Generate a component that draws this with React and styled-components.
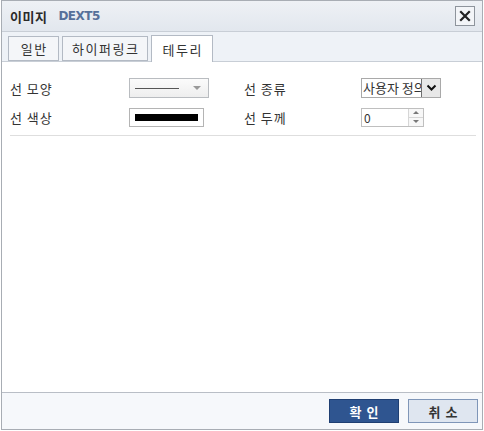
import React from "react";
import styled, { createGlobalStyle } from "styled-components";

const Global = createGlobalStyle`
  html, body { margin: 0; padding: 0; background: #fff; }
  body { font-family: "Noto Sans CJK KR", "Noto Sans", sans-serif; }
  * { box-sizing: border-box; }
`;

const Dialog = styled.div`
  margin-left: 1px;
  width: 482px;
  height: 430px;
  border: 1px solid #a8adb4;
  display: flex;
  flex-direction: column;
  background: #fff;
`;

const TitleBar = styled.div`
  height: 31px;
  flex: none;
  display: flex;
  align-items: center;
  padding: 0 7px 0 8px;
  background: linear-gradient(#eef1f5, #e2e7ee);
  border-bottom: 1px solid #c8ced6;
`;

const Title = styled.span`
  font-size: 13px;
  font-weight: 700;
  color: #2a2a2a;
  letter-spacing: 0.5px;
`;

const Product = styled.span`
  margin-left: 11px;
  font-family: "DejaVu Sans", Verdana, sans-serif;
  font-size: 12px;
  font-weight: 700;
  color: #56709a;
  letter-spacing: -0.5px;
`;

const CloseButton = styled.button`
  margin-left: auto;
  width: 20px;
  height: 20px;
  padding: 0;
  border: 1px solid #8e949c;
  background: #f3f5f8;
  display: flex;
  align-items: center;
  justify-content: center;
`;

const TabBar = styled.div`
  height: 30px;
  flex: none;
  display: flex;
  align-items: flex-end;
  gap: 3px;
  padding-left: 6px;
  background: #eef2f7;
  border-bottom: 1px solid #c8ced6;
`;

const Tab = styled.div`
  height: ${(p) => (p.$active ? "27px" : "25px")};
  width: ${(p) => p.$w}px;
  margin-bottom: ${(p) => (p.$active ? "-1px" : "0")};
  display: flex;
  align-items: center;
  justify-content: center;
  border: 1px solid #b3bac4;
  border-bottom: ${(p) => (p.$active ? "none" : "1px solid #b3bac4")};
  background: ${(p) => (p.$active ? "#fff" : "#f4f6f9")};
  font-size: 13px;
  letter-spacing: 1.5px;
  text-indent: 1.5px;
  color: #333;
  padding-top: ${(p) => (p.$active ? "1px" : "0")};
`;

const Content = styled.div`
  flex: 1;
  padding: 16px 6px 0 8px;
`;

const Form = styled.div`
  display: grid;
  grid-template-columns: 119px 115px 117px auto;
  grid-auto-rows: 20px;
  row-gap: 9px;
  align-items: center;
`;

const Label = styled.span`
  font-size: 13px;
  color: #333;
  letter-spacing: 1px;
`;

const LineSelect = styled.div`
  width: 80px;
  height: 20px;
  border: 1px solid #b9bcc0;
  background: linear-gradient(#fbfbfb, #eeeeee);
  display: flex;
  align-items: center;
  padding: 0 7px 0 5px;
`;

const LineSample = styled.div`
  width: 44px;
  height: 1px;
  background: #555;
`;

const Caret = styled.div`
  margin-left: auto;
  width: 0;
  height: 0;
  border-left: 4px solid transparent;
  border-right: 4px solid transparent;
  border-top: 4px solid #999;
`;

const TypeSelect = styled.div`
  width: 80px;
  height: 20px;
  border: 1px solid #a9a9a9;
  background: #fff;
  display: flex;
  align-items: stretch;
  overflow: hidden;
`;

const TypeText = styled.span`
  flex: 1;
  overflow: hidden;
  white-space: nowrap;
  font-size: 13px;
  line-height: 18px;
  padding-left: 1px;
  color: #333;
`;

const TypeButton = styled.div`
  width: 20px;
  flex: none;
  background: #e8e8e8;
  display: flex;
  align-items: center;
  justify-content: center;
  margin: -1px -1px -1px 0;
  border: 1px solid #6f6f6f;
`;

const ColorBox = styled.div`
  width: 75px;
  height: 19px;
  border: 1px solid #b4b4b4;
  background: #fff;
  padding: 5px 5px;
`;

const ColorFill = styled.div`
  height: 100%;
  background: #000;
`;

const Spin = styled.div`
  width: 63px;
  height: 19px;
  border: 1px solid #bfbfbf;
  display: flex;
  background: #fff;
`;

const SpinValue = styled.span`
  flex: 1;
  font-size: 12px;
  line-height: 17px;
  padding-left: 2px;
  color: #333;
`;

const SpinButtons = styled.div`
  width: 15px;
  display: flex;
  flex-direction: column;
  border-left: 1px solid #d6d6d6;
`;

const SpinButton = styled.div`
  flex: 1;
  display: flex;
  align-items: center;
  justify-content: center;
  background: #f7f7f7;
  & + & { border-top: 1px solid #d6d6d6; }
`;

const Arrow = styled.div`
  width: 0;
  height: 0;
  border-left: 3px solid transparent;
  border-right: 3px solid transparent;
  ${(p) => (p.$up ? "border-bottom: 3px solid #777;" : "border-top: 3px solid #777;")}
`;

const Separator = styled.div`
  margin-top: 8px;
  height: 1px;
  background: #dedede;
`;

const Footer = styled.div`
  height: 37px;
  flex: none;
  border-top: 1px solid #b9bec6;
  background: #f6f8fb;
  display: flex;
  align-items: center;
  justify-content: flex-end;
  gap: 9px;
  padding: 0 4px 0 0;
`;

const Button = styled.button`
  width: 70px;
  height: 24px;
  padding: 0;
  font-family: "Noto Sans CJK KR", sans-serif;
  font-size: 13px;
  font-weight: 700;
  letter-spacing: 5px;
  text-indent: 5px;
  border: 1px solid ${(p) => (p.$primary ? "#1f3f72" : "#7f96b8")};
  background: ${(p) => (p.$primary ? "#2f5590" : "#dfe6f0")};
  color: ${(p) => (p.$primary ? "#fff" : "#333")};
`;

export default function App() {
  return (
    <>
      <Global />
      <Dialog>
        <TitleBar>
          <Title>이미지</Title>
          <Product>DEXT5</Product>
          <CloseButton>
            <svg width="12" height="12" viewBox="0 0 12 12">
              <path d="M2 2 L10 10 M10 2 L2 10" stroke="#222" strokeWidth="2.2" strokeLinecap="square" />
            </svg>
          </CloseButton>
        </TitleBar>
        <TabBar>
          <Tab $w={51}>일반</Tab>
          <Tab $w={86}>하이퍼링크</Tab>
          <Tab $w={62} $active>테두리</Tab>
        </TabBar>
        <Content>
          <Form>
            <Label>선 모양</Label>
            <LineSelect>
              <LineSample />
              <Caret />
            </LineSelect>
            <Label>선 종류</Label>
            <TypeSelect>
              <TypeText>사용자 정의</TypeText>
              <TypeButton>
                <svg width="11" height="8" viewBox="0 0 11 8">
                  <path d="M1.5 1.5 L5.5 5.5 L9.5 1.5" stroke="#111" strokeWidth="2" fill="none" />
                </svg>
              </TypeButton>
            </TypeSelect>
            <Label>선 색상</Label>
            <ColorBox>
              <ColorFill />
            </ColorBox>
            <Label>선 두께</Label>
            <Spin>
              <SpinValue>0</SpinValue>
              <SpinButtons>
                <SpinButton><Arrow $up /></SpinButton>
                <SpinButton><Arrow /></SpinButton>
              </SpinButtons>
            </Spin>
          </Form>
          <Separator />
        </Content>
        <Footer>
          <Button $primary>확인</Button>
          <Button>취소</Button>
        </Footer>
      </Dialog>
    </>
  );
}
